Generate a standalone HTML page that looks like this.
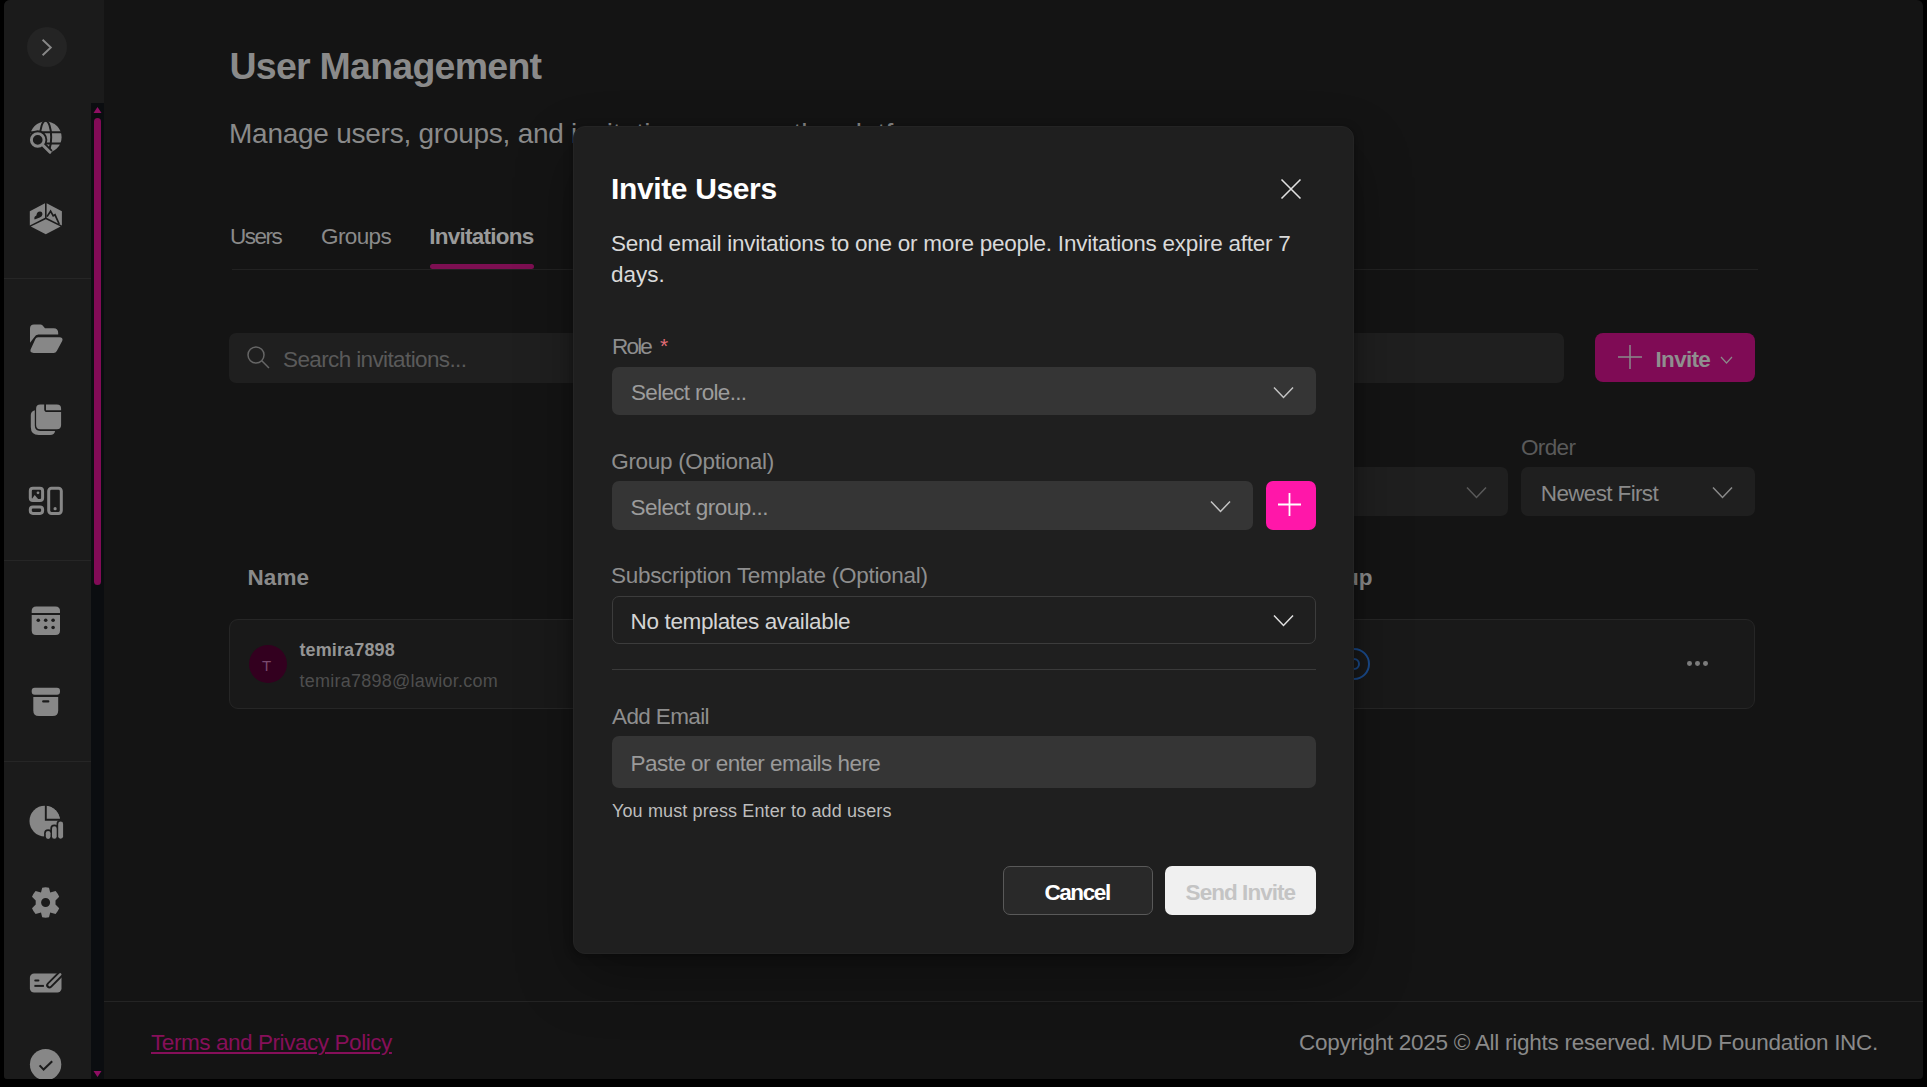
<!DOCTYPE html>
<html><head><meta charset="utf-8"><title>User Management</title>
<style>
*{box-sizing:border-box;margin:0;padding:0}
html,body{width:1927px;height:1087px;overflow:hidden;background:#000;font-family:"Liberation Sans",sans-serif}
.abs{position:absolute}
.t{position:absolute;line-height:1;white-space:nowrap}
.win{position:absolute;left:4px;top:0;width:1919px;height:1079px;background:#141414;border-radius:6px 6px 4px 4px;overflow:hidden}
.side{position:absolute;left:4px;top:0;width:100px;height:1079px;background:#1b1b1b;border-radius:6px 0 0 3px}
.sep{position:absolute;left:4px;width:87px;height:1px;background:#262626}
.track{position:absolute;left:91px;top:103px;width:13px;height:976px;background:#0b0d10}
.thumb{position:absolute;left:94px;top:118px;width:7px;height:467px;border-radius:4px;background:#820b57}

.box{position:absolute}

</style></head><body>
<div class="win"></div>
<div class="side"></div>
<div class="abs" style="left:27px;top:27px;width:40px;height:40px;border-radius:50%;background:#242424"></div>
<svg class="abs" style="left:37px;top:37px" width="20" height="20" viewBox="0 0 20 20"><path d="M5.6 2.8 L13.8 10.5 L5.6 18.2" fill="none" stroke="#888" stroke-width="1.9"/></svg>
<div class="track"></div>
<div class="thumb"></div>
<svg class="abs" style="left:91px;top:105px" width="13" height="10" viewBox="0 0 13 10"><path d="M2.5 8 L6.5 2 L10.5 8Z" fill="#8e0e63"/></svg>
<svg class="abs" style="left:91px;top:1069px" width="13" height="10" viewBox="0 0 13 10"><path d="M2.5 2 L6.5 8 L10.5 2Z" fill="#8e0e63"/></svg>
<div class="sep" style="top:278px"></div>
<div class="sep" style="top:560px"></div>
<div class="sep" style="top:761px"></div>

<!-- sidebar icons placeholder -->
<svg class="abs" style="left:20px;top:110px" width="52" height="52" viewBox="0 0 52 52">
<defs><mask id="mg"><rect width="52" height="52" fill="#fff"/>
<ellipse cx="25.6" cy="27.2" rx="5.6" ry="16.5" fill="none" stroke="#000" stroke-width="2"/>
<path d="M8 22.2H44M8 33.4H44" stroke="#000" stroke-width="2"/>
<circle cx="17.7" cy="29.9" r="9.6" fill="#000"/>
<path d="M23.5 35.7L30.3 42.5" stroke="#000" stroke-width="6.5"/>
<path d="M0 29.9H17.7L40 52.2H0Z" fill="#000"/>
</mask></defs>
<circle cx="25.8" cy="27.2" r="15.8" fill="#878787" mask="url(#mg)"/>
<circle cx="17.7" cy="29.9" r="6.3" fill="none" stroke="#878787" stroke-width="2.9"/>
<path d="M23 35.2L30 42.2" stroke="#878787" stroke-width="3" stroke-linecap="round"/>
</svg>
<svg class="abs" style="left:20px;top:192px" width="52" height="52" viewBox="0 0 52 52">
<path d="M9.8 19.2L25 11.2V25.8L9.8 33.4Z" fill="#878787"/>
<path d="M26.6 11.2L41.9 19.2V33.4L26.6 25.8Z" fill="#878787"/>
<path d="M10.8 34.6L25.8 27.2L40.6 34.6L25.8 42.3Z" fill="#878787"/>
<path d="M14.6 27.6Q13.6 24.4 16.4 23.4Q16.8 19.6 20 19.6Q22.6 19.8 22.4 22.6Q22.2 24.4 19.8 25.6Z" fill="#1b1b1b"/>
<path d="M27 24.6L30.6 19.2L33.2 23.8L35 22.8L39.2 32" fill="none" stroke="#1b1b1b" stroke-width="1.7" stroke-linejoin="miter"/>
</svg>
<svg class="abs" style="left:22px;top:315px" width="48" height="48" viewBox="0 0 48 48">
<path d="M8 27.8V13.6Q8 9.5 12 9.5H18.6Q19.6 9.5 20.4 10.3L23 13.3H31.6Q36.2 13.3 36.2 18V19.6H16.4Q13.6 19.6 12.3 22.2Z" fill="#878787"/>
<path d="M16 22.2H37.4Q41.4 22.2 40.3 25.8L34.8 36Q33.8 37.9 31.6 37.9H11.6Q7.6 37.9 8.6 34.6L13.4 23.9Q14.2 22.2 16 22.2Z" fill="#878787"/>
</svg>
<svg class="abs" style="left:22px;top:395px" width="48" height="48" viewBox="0 0 48 48">
<path d="M14.1 13.7Q14.1 9.5 18.3 9.5H22.2V14.3Q22.2 17.1 25 17.1H39.1V30Q39.1 34.2 34.9 34.2H18.3Q14.1 34.2 14.1 30Z" fill="#878787"/>
<path d="M24 9.5H34.9Q39.1 9.5 39.1 13.7V15.3H24Z" fill="#878787"/>
<path d="M12.8 15.2V30.6Q12.8 35.9 18.1 35.9H33.1Q32.4 40 28.2 40H16.8Q8.8 40 8.8 32V20Q8.8 16.4 12.8 15.2Z" fill="#878787"/>
</svg>
<svg class="abs" style="left:22px;top:476px" width="48" height="48" viewBox="0 0 48 48" fill="none" stroke="#878787" stroke-width="3">
<rect x="8.3" y="12.3" width="12.3" height="12.2" rx="2.6"/>
<rect x="8.3" y="30.9" width="12.3" height="6.5" rx="2.6"/>
<rect x="26.7" y="12.3" width="12.6" height="25.1" rx="2.8"/>
<path d="M9.5 23.5L12.7 19L16.5 23.5Z" fill="#878787" stroke="none"/>
<circle cx="16" cy="16.8" r="1.4" fill="#878787" stroke="none"/>
<circle cx="33.1" cy="32.7" r="1.6" fill="#878787" stroke="none"/>
</svg>
<svg class="abs" style="left:22px;top:597px" width="48" height="48" viewBox="0 0 48 48">
<path d="M9.7 15.9V14Q9.7 9.5 14.2 9.5H33.5Q38 9.5 38 14V15.9Z" fill="#878787"/>
<path d="M9.7 17.9H38V33.5Q38 38 33.5 38H14.2Q9.7 38 9.7 33.5Z" fill="#878787"/>
<g fill="#1b1b1b"><circle cx="16.3" cy="23.2" r="1.8"/><circle cx="23.7" cy="23.2" r="1.8"/><circle cx="31.1" cy="23.2" r="1.8"/><circle cx="23.7" cy="30.5" r="1.8"/><circle cx="31.1" cy="30.5" r="1.8"/></g>
</svg>
<svg class="abs" style="left:22px;top:678px" width="48" height="48" viewBox="0 0 48 48">
<rect x="9.7" y="9.7" width="28.3" height="7.1" rx="3" fill="#878787"/>
<path d="M11.3 19H36.2V32.5Q36.2 38 30.7 38H16.8Q11.3 38 11.3 32.5Z" fill="#878787"/>
<rect x="20.1" y="22.3" width="7.3" height="2.2" rx="1.1" fill="#1b1b1b"/>
</svg>
<svg class="abs" style="left:22px;top:798px" width="48" height="48" viewBox="0 0 48 48">
<defs><mask id="mc"><rect width="48" height="48" fill="#fff"/>
<path d="M23.8 4V21.8H42" fill="none" stroke="#000" stroke-width="1.9"/>
<rect x="22.1" y="31.2" width="8.1" height="12" rx="4" fill="#000"/>
<rect x="28.3" y="26.6" width="8.1" height="16" rx="4" fill="#000"/>
<rect x="34.5" y="21.9" width="8.3" height="20" rx="4.1" fill="#000"/>
</mask></defs>
<g mask="url(#mc)"><circle cx="22.8" cy="23.1" r="15.3" fill="#878787"/><path d="M24.8 7.9A15.3 15.3 0 0 1 37.9 20.8H24.8Z" fill="#878787"/></g>
<g fill="#878787"><rect x="23.8" y="32.9" width="4.7" height="8" rx="2.35"/><rect x="30" y="28.3" width="4.7" height="12.5" rx="2.35"/><rect x="36.2" y="23.6" width="4.9" height="17.2" rx="2.45"/></g>
</svg>
<svg class="abs" style="left:22px;top:878px" width="48" height="48" viewBox="0 0 48 48">
<path fill="#878787" fill-rule="evenodd" d="M20.2 9.7Q23.6 8.9 27 9.7L28.2 14.6L33.6 13Q35.9 15.6 37.2 18.8L33.5 22.4V26.6L37.2 30.2Q35.9 33.4 33.6 36L28.2 34.4L27 39.3Q23.6 40.1 20.2 39.3L19 34.4L13.6 36Q11.3 33.4 10 30.2L13.7 26.6V22.4L10 18.8Q11.3 15.6 13.6 13L19 14.6Z M23.6 20A4.5 4.5 0 1 0 23.6 29A4.5 4.5 0 1 0 23.6 20Z"/>
</svg>
<svg class="abs" style="left:22px;top:959px" width="48" height="48" viewBox="0 0 48 48">
<defs><mask id="mk"><rect width="48" height="48" fill="#fff"/><path d="M27.4 26.2L38.4 15.2" stroke="#000" stroke-width="6.4" stroke-linecap="round"/></mask></defs>
<rect x="7.9" y="14.6" width="31.6" height="19" rx="4.2" fill="#878787" mask="url(#mk)"/>
<path d="M27.6 26L38.2 15.4" stroke="#878787" stroke-width="2.6" stroke-linecap="round"/>
<path d="M13.3 21.5H16.4" stroke="#1b1b1b" stroke-width="2.1" stroke-linecap="round"/>
<path d="M12.4 26.9H21.9" stroke="#1b1b1b" stroke-width="2"/>
</svg>
<svg class="abs" style="left:22px;top:1039px" width="48" height="40" viewBox="0 0 48 40">
<circle cx="23.6" cy="25.6" r="15.7" fill="#878787"/>
<path d="M17.6 26.4L21.6 30.6L30.2 22.2" fill="none" stroke="#1b1b1b" stroke-width="2.1"/>
</svg>


<!-- main content -->
<div class="t" style="left:229.50px;top:48px;font-size:37.5px;color:#8a8a8a;font-weight:700;letter-spacing:-0.749px;">User Management</div>

<div class="t" style="left:229.00px;top:120px;font-size:28px;color:#8a8a8a;letter-spacing:-0.250px;">Manage users, groups, and</div>

<div class="t" style="left:571.00px;top:120px;font-size:28px;color:#8a8a8a;">invitations across the platform</div>

<div class="t" style="left:230.00px;top:226px;font-size:22.5px;color:#8a8a8a;letter-spacing:-1.500px;">Users</div>

<div class="t" style="left:321.00px;top:226px;font-size:22.5px;color:#8a8a8a;letter-spacing:-0.600px;">Groups</div>

<div class="t" style="left:429.30px;top:226px;font-size:22.5px;color:#9a9a9a;font-weight:700;letter-spacing:-0.760px;">Invitations</div>

<div class="abs" style="left:430px;top:264px;width:104px;height:5px;border-radius:3px;background:#7d0f52"></div>
<div class="abs" style="left:232px;top:269px;width:1526px;height:1px;background:#222"></div>

<div class="abs" style="left:229px;top:333px;width:1335px;height:50px;border-radius:7px;background:#1f1f1f"></div>
<svg class="abs" style="left:246px;top:345px" width="24" height="24" viewBox="0 0 24 24"><circle cx="10" cy="10" r="8" fill="none" stroke="#666" stroke-width="1.5"/><path d="M15.8 15.8 L23 23" stroke="#666" stroke-width="1.5"/></svg>
<div class="t" style="left:283.00px;top:349px;font-size:22.5px;color:#5a5a5a;letter-spacing:-0.620px;">Search invitations...</div>


<div class="abs" style="left:1595px;top:333px;width:160px;height:49px;border-radius:8px;background:#7f0b55"></div>
<svg class="abs" style="left:1618px;top:345px" width="24" height="24" viewBox="0 0 24 24"><path d="M12 0V24M0 12H24" stroke="#8a8a8a" stroke-width="1.5"/></svg>
<div class="t" style="left:1655.60px;top:349px;font-size:22.5px;color:#8f8f8f;font-weight:700;letter-spacing:-0.720px;">Invite</div>

<svg class="abs" style="left:1720px;top:355px" width="13" height="10" viewBox="0 0 13 10"><path d="M1 2 L6.5 8 L12 2" fill="none" stroke="#8a8a8a" stroke-width="1.2"/></svg>

<div class="t" style="left:1521.00px;top:437px;font-size:22.5px;color:#5a5a5a;letter-spacing:-0.650px;">Order</div>

<div class="abs" style="left:1274px;top:467px;width:234px;height:49px;border-radius:7px;background:#1f1f1f"></div>
<svg class="abs" style="left:1466px;top:486px" width="21" height="13" viewBox="0 0 21 13"><path d="M1 1.5 L10.5 11.5 L20 1.5" fill="none" stroke="#5a5a5a" stroke-width="1.5"/></svg>
<div class="abs" style="left:1521px;top:467px;width:234px;height:49px;border-radius:7px;background:#1f1f1f"></div>
<div class="t" style="left:1540.80px;top:483px;font-size:22.5px;color:#8a8a8a;letter-spacing:-0.645px;">Newest First</div>

<svg class="abs" style="left:1712px;top:486px" width="21" height="13" viewBox="0 0 21 13"><path d="M1 1.5 L10.5 11.5 L20 1.5" fill="none" stroke="#8a8a8a" stroke-width="1.5"/></svg>

<div class="t" style="left:247.40px;top:567px;font-size:22.5px;color:#8a8a8a;font-weight:700;letter-spacing:0.131px;">Name</div>

<div class="t" style="left:1305.00px;top:567px;font-size:22.5px;color:#8a8a8a;font-weight:700;">Group</div>


<div class="abs" style="left:229px;top:619px;width:1526px;height:90px;border-radius:9px;background:#191919;border:1px solid #262626"></div>
<div class="abs" style="left:249px;top:645px;width:38px;height:38px;border-radius:50%;background:#33001f"></div>
<div class="t" style="left:262.00px;top:658px;font-size:15px;color:#7a4a6e;">T</div>

<div class="t" style="left:299.40px;top:641px;font-size:18px;color:#959595;font-weight:700;letter-spacing:0.138px;">temira7898</div>

<div class="t" style="left:299.40px;top:672px;font-size:18px;color:#4e4e4e;letter-spacing:0.255px;">temira7898@lawior.com</div>

<svg class="abs" style="left:1336px;top:646px" width="36" height="36" viewBox="0 0 36 36"><circle cx="18" cy="18" r="15" fill="none" stroke="#1a4a8a" stroke-width="2"/><circle cx="18" cy="18" r="5" fill="none" stroke="#1a4a8a" stroke-width="2"/></svg>
<div class="abs" style="left:1687.4px;top:661.4px;width:4.8px;height:4.8px;border-radius:50%;background:#7c7c7c"></div>
<div class="abs" style="left:1695.1px;top:661.4px;width:4.8px;height:4.8px;border-radius:50%;background:#7c7c7c"></div>
<div class="abs" style="left:1702.9px;top:661.4px;width:4.8px;height:4.8px;border-radius:50%;background:#7c7c7c"></div>

<div class="abs" style="left:104px;top:1001px;width:1819px;height:1px;background:#242424"></div>
<div class="t" style="left:151.00px;top:1032px;font-size:22.5px;color:#860f5a;letter-spacing:-0.435px;text-decoration:underline;text-decoration-thickness:2px;text-underline-offset:2px">Terms and Privacy Policy</div>

<div class="t" style="left:1299.00px;top:1032px;font-size:22.5px;color:#8a8a8a;letter-spacing:-0.268px;">Copyright 2025 &copy; All rights reserved. MUD Foundation INC.</div>


<!-- modal -->
<div class="abs" style="left:573px;top:126px;width:781px;height:828px;border-radius:12px;background:#1f1f1f;border:1px solid #242424;box-shadow:0 2px 10px rgba(0,0,0,0.35),0 25px 60px -5px rgba(0,0,0,0.35)"></div>
<div class="t" style="left:611.00px;top:174px;font-size:30px;color:#ffffff;font-weight:700;letter-spacing:-0.364px;">Invite Users</div>

<svg class="abs" style="left:1280px;top:178px" width="22" height="22" viewBox="0 0 22 22"><path d="M1.5 1.5L20.5 20.5M20.5 1.5L1.5 20.5" stroke="#e0e0e0" stroke-width="1.6"/></svg>
<div class="t" style="left:611.00px;top:233px;font-size:22.5px;color:#d9d9d9;letter-spacing:-0.237px;">Send email invitations to one or more people. Invitations expire after 7</div>

<div class="t" style="left:611.00px;top:264px;font-size:22.5px;color:#d9d9d9;">days.</div>

<div class="t" style="left:612.00px;top:336px;font-size:22.5px;color:#8e8e8e;letter-spacing:-1.797px;">Role</div>

<div class="t" style="left:660.00px;top:335px;font-size:21px;color:#e06c75;">*</div>

<div class="abs" style="left:612px;top:367px;width:704px;height:48px;border-radius:7px;background:#353535"></div>
<div class="t" style="left:631.00px;top:382px;font-size:22.5px;color:#9c9c9c;letter-spacing:-0.692px;">Select role...</div>

<svg class="abs" style="left:1273px;top:385.6px" width="21" height="13" viewBox="0 0 21 13"><path d="M1 1.5 L10.5 11.5 L20 1.5" fill="none" stroke="#c4c4c4" stroke-width="1.5"/></svg>

<div class="t" style="left:611.20px;top:451px;font-size:22.5px;color:#8e8e8e;letter-spacing:-0.299px;">Group (Optional)</div>

<div class="abs" style="left:612px;top:481px;width:641px;height:49px;border-radius:7px;background:#353535"></div>
<div class="t" style="left:630.60px;top:497px;font-size:22.5px;color:#9c9c9c;letter-spacing:-0.520px;">Select group...</div>

<svg class="abs" style="left:1210px;top:499.6px" width="21" height="13" viewBox="0 0 21 13"><path d="M1 1.5 L10.5 11.5 L20 1.5" fill="none" stroke="#c4c4c4" stroke-width="1.5"/></svg>
<div class="abs" style="left:1266px;top:481px;width:50px;height:49px;border-radius:7px;background:#ff17a9"></div>
<svg class="abs" style="left:1277.4px;top:492.2px" width="25" height="25" viewBox="0 0 25 25"><path d="M12.5 1V24M1 12.5H24" stroke="#fff" stroke-width="1.8"/></svg>

<div class="t" style="left:611.00px;top:565px;font-size:22.5px;color:#8e8e8e;letter-spacing:-0.291px;">Subscription Template (Optional)</div>

<div class="abs" style="left:612px;top:596px;width:704px;height:48px;border-radius:7px;border:1px solid #3c3c3c"></div>
<div class="t" style="left:630.60px;top:611px;font-size:22.5px;color:#d4d4d4;letter-spacing:-0.366px;">No templates available</div>

<svg class="abs" style="left:1273px;top:614px" width="21" height="13" viewBox="0 0 21 13"><path d="M1 1.5 L10.5 11.5 L20 1.5" fill="none" stroke="#e0e0e0" stroke-width="1.5"/></svg>
<div class="abs" style="left:612px;top:669px;width:704px;height:1px;background:#3a3a3a"></div>

<div class="t" style="left:612.00px;top:706px;font-size:22.5px;color:#8e8e8e;letter-spacing:-0.625px;">Add Email</div>

<div class="abs" style="left:612px;top:736px;width:704px;height:52px;border-radius:7px;background:#353535"></div>
<div class="t" style="left:630.60px;top:753px;font-size:22.5px;color:#9a9a9a;letter-spacing:-0.544px;">Paste or enter emails here</div>

<div class="t" style="left:612.00px;top:802px;font-size:18px;color:#bdbdbd;letter-spacing:0.125px;">You must press Enter to add users</div>


<div class="abs" style="left:1003px;top:866px;width:150px;height:49px;border-radius:7px;background:#292929;border:1px solid #595959"></div>
<div class="t" style="left:1044.40px;top:882px;font-size:22.5px;color:#ffffff;font-weight:700;letter-spacing:-1.400px;">Cancel</div>

<div class="abs" style="left:1165px;top:866px;width:151px;height:49px;border-radius:7px;background:#f0f0f0"></div>
<div class="t" style="left:1185.60px;top:882px;font-size:22.5px;color:#c4c4c4;font-weight:700;letter-spacing:-0.950px;">Send Invite</div>


</body></html>
